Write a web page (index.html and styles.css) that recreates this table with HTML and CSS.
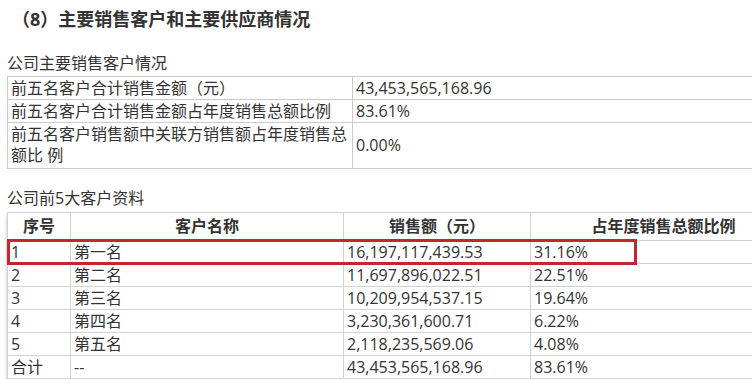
FILE: index.html
```html
<!DOCTYPE html>
<html lang="zh-CN">
<head>
  <meta charset="UTF-8">
  <title>主要销售客户和主要供应商情况</title>
  <link rel="stylesheet" href="styles.css">
</head>
<body>
  <h2 class="title">（8）主要销售客户和主要供应商情况</h2>

  <p class="label">公司主要销售客户情况</p>
  <table class="summary">
    <tr>
      <td class="key">前五名客户合计销售金额（元）</td>
      <td>43,453,565,168.96</td>
    </tr>
    <tr>
      <td class="key">前五名客户合计销售金额占年度销售总额比例</td>
      <td>83.61%</td>
    </tr>
    <tr class="tall">
      <td class="key">前五名客户销售额中关联方销售额占年度销售总额比 例</td>
      <td>0.00%</td>
    </tr>
  </table>

  <p class="label second">公司前5大客户资料</p>
  <div class="shot">
    <table class="customers">
      <tr>
        <th class="c-no">序号</th>
        <th class="c-name">客户名称</th>
        <th class="c-amount">销售额（元）</th>
        <th class="c-ratio">占年度销售总额比例</th>
      </tr>
      <tr><td>1</td><td>第一名</td><td>16,197,117,439.53</td><td>31.16%</td></tr>
      <tr><td>2</td><td>第二名</td><td>11,697,896,022.51</td><td>22.51%</td></tr>
      <tr><td>3</td><td>第三名</td><td>10,209,954,537.15</td><td>19.64%</td></tr>
      <tr><td>4</td><td>第四名</td><td>3,230,361,600.71</td><td>6.22%</td></tr>
      <tr><td>5</td><td>第五名</td><td>2,118,235,569.06</td><td>4.08%</td></tr>
      <tr><td>合计</td><td>--</td><td>43,453,565,168.96</td><td>83.61%</td></tr>
    </table>
    <!-- highlight on the first row -->
    <div class="mark"></div>
  </div>
</body>
</html>
```

FILE: styles.css
```css
body {
  margin: 0;
  padding: 0 0 0 7px;
  width: 800px;
  background: #fff;
  color: #333;
  font-family: "Open Sans", "Noto Sans CJK SC", sans-serif;
  font-size: 16px;
}
html {
  overflow: hidden;
}
.title {
  margin: 6px 0 0 5px;
  font-size: 18px;
  line-height: 26px;
  font-weight: bold;
  color: #333;
}
.label {
  margin: 21px 0 2px;
  line-height: 21px;
}
.label.second {
  margin-top: 19px;
  margin-bottom: 3px;
}
table {
  border-collapse: collapse;
}
td, th {
  padding: 0 3px;
  line-height: 22px;
  text-align: left;
  vertical-align: middle;
  white-space: nowrap;
}
.summary {
  width: 760px;
}
.summary td {
  border: 1px solid #cacaca;
}
.summary .key {
  width: 338px;
  white-space: normal;
}
.summary .tall td {
  line-height: 21px;
  padding: 1px 3px 2px;
}
.shot {
  position: relative;
  width: 790px;
  box-shadow: 1px 3px 4px rgba(0, 0, 0, 0.45);
}
.customers {
  width: 790px;
  border: 1px solid #a4a4a4;
}
.customers td, .customers th {
  border: 1px solid #d2d2d2;
}
.customers th {
  line-height: 27px;
  text-align: center;
  font-weight: bold;
}
.c-no { width: 56px; }
.c-name { width: 266px; }
.c-amount { width: 180px; }
.mark {
  position: absolute;
  left: 0;
  top: 27px;
  width: 624px;
  height: 20px;
  border: 3px solid #c1272d;
}
```
